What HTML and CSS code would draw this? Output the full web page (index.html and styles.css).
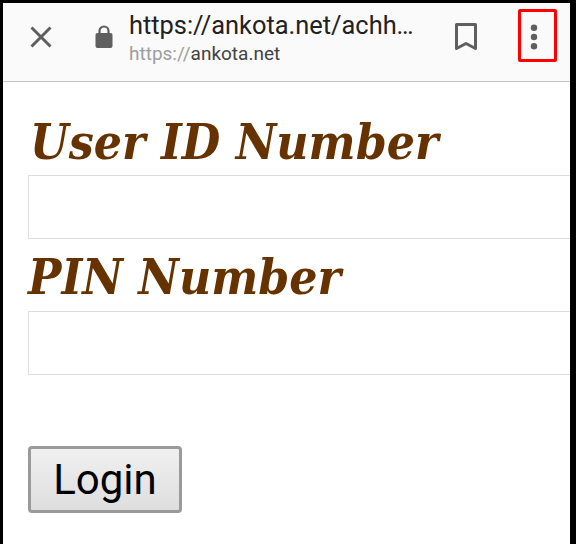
FILE: index.html
```html
<!DOCTYPE html>
<html lang="en">
<head>
<meta charset="utf-8">
<title>Login</title>
<link rel="stylesheet" href="styles.css">
</head>
<body>
<div class="screen">
  <header class="toolbar">
    <svg class="icon-close" width="24" height="24" viewBox="0 0 24 24"><path d="M2.500 2.500 L21.500 21.500 M21.500 2.500 L2.500 21.500" fill="none" stroke="#5f5f5f" stroke-width="3"/></svg>
    <svg class="icon-lock" width="18" height="23" viewBox="0 0 18 23"><path d="M4.500 9V6a4.500 4.500 0 0 1 9 0V9" fill="none" stroke="#5f5f5f" stroke-width="2.200"/><rect x="0.500" y="8" width="17" height="15" rx="2" fill="#5f5f5f"/></svg>
    <div class="address">
      <div class="url">https://ankota.net/achh…</div>
      <div class="origin"><span class="scheme">https://</span>ankota.net</div>
    </div>
    <svg class="icon-bookmark" width="24" height="28" viewBox="0 0 24 28"><path d="M2.500 1.500H21.500V25.500L12 20.500L2.500 25.500Z" fill="none" stroke="#5f5f5f" stroke-width="3" stroke-linejoin="round"/></svg>
    <div class="menu-box">
      <svg class="dots" width="8" height="28" viewBox="0 0 8 28"><circle cx="4" cy="4.800" r="3.200" fill="#5f5f5f"/><circle cx="4" cy="14" r="3.200" fill="#5f5f5f"/><circle cx="4" cy="23.200" r="3.200" fill="#5f5f5f"/></svg>
    </div>
  </header>
  <main class="content">
    <h1 class="label first">User ID Number</h1>
    <input class="field" type="text" aria-label="User ID Number">
    <h1 class="label second">PIN Number</h1>
    <input class="field" type="password" aria-label="PIN Number">
    <button class="login" type="button">Login</button>
  </main>
</div>
</body>
</html>
```
FILE: styles.css
```css
* { box-sizing: border-box; }
html, body { margin: 0; padding: 0; height: 100%; background: #000; overflow: hidden; }
.screen {
  width: 576px;
  height: 544px;
  padding: 3px 6px 0 3px;
  display: flex;
  flex-direction: column;
}
.toolbar {
  height: 79px;
  flex: none;
  background: #fafafa;
  border-bottom: 1px solid #c4c4c4;
  display: flex;
  align-items: flex-start;
  font-family: Roboto, sans-serif;
}
.icon-close { margin-left: 26px; margin-top: 22px; flex: none; }
.icon-lock { margin-left: 42px; margin-top: 22px; flex: none; }
.address { margin-left: 16px; width: 300px; flex: none; margin-top: 7px; }
.url { font-size: 25.400px; line-height: 30px; color: #212121; white-space: nowrap; }
.origin { font-size: 19px; line-height: 24px; margin-top: 2px; color: #424242; white-space: nowrap; }
.scheme { color: #9e9e9e; }
.icon-bookmark { margin-left: 25px; margin-top: 20px; flex: none; }
.menu-box {
  margin-left: 40px;
  margin-top: 6px;
  width: 39px;
  height: 53px;
  border: 3px solid #f00;
  border-radius: 2px;
  display: flex;
  align-items: center;
  justify-content: center;
  flex: none;
}
.dots { margin-right: 8px; margin-top: 2px; }
.content {
  flex: 1;
  background: #fff;
  padding: 0 0 0 25px;
  overflow: hidden;
}
.label {
  margin: 0;
  font-family: "DejaVu Serif Condensed", "DejaVu Serif", serif;
  font-stretch: condensed;
  font-style: italic;
  font-weight: bold;
  font-size: 49.400px;
  line-height: 58px;
  color: #663300;
  white-space: nowrap;
}
.first { margin-top: 31px; padding-left: 2px; height: 62px; }
.second { height: 72px; padding-top: 9px; }
.field {
  display: block;
  width: 560px;
  height: 64px;
  border: 1px solid #ddd;
  background: #fff;
  margin: 0;
  padding: 0;
}
.login {
  display: block;
  margin-top: 71px;
  width: 154px;
  height: 67px;
  border: 3px solid #9a9a9a;
  border-radius: 4px;
  background: linear-gradient(#f0f0f0, #dedede);
  font-family: Roboto, sans-serif;
  font-size: 42px;
  color: #000;
  padding: 0;
}
```
